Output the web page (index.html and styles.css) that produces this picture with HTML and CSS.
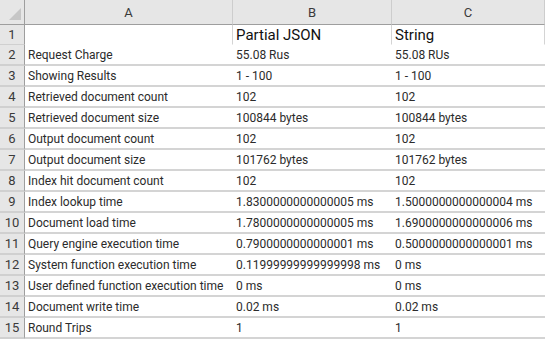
FILE: index.html
```html
<!DOCTYPE html>
<html>
<head>
<meta charset="utf-8">
<link rel="stylesheet" href="styles.css">
</head>
<body>
<table class="sheet">
  <colgroup>
    <col class="c-num"><col class="c-a"><col class="c-b"><col class="c-c">
  </colgroup>
  <thead>
    <tr class="colhead">
      <th class="corner"><span class="tri"></span></th>
      <th>A</th><th>B</th><th>C</th>
    </tr>
  </thead>
  <tbody>
    <tr class="first"><th class="rn">1</th><td></td><td class="big">Partial JSON</td><td class="big last">String</td></tr>
    <tr><th class="rn">2</th><td>Request Charge</td><td>55.08 Rus</td><td>55.08 RUs</td></tr>
    <tr><th class="rn">3</th><td>Showing Results</td><td>1 - 100</td><td>1 - 100</td></tr>
    <tr><th class="rn">4</th><td>Retrieved document count</td><td>102</td><td>102</td></tr>
    <tr><th class="rn">5</th><td>Retrieved document size</td><td>100844 bytes</td><td>100844 bytes</td></tr>
    <tr><th class="rn">6</th><td>Output document count</td><td>102</td><td>102</td></tr>
    <tr><th class="rn">7</th><td>Output document size</td><td>101762 bytes</td><td>101762 bytes</td></tr>
    <tr><th class="rn">8</th><td>Index hit document count</td><td>102</td><td>102</td></tr>
    <tr><th class="rn">9</th><td>Index lookup time</td><td>1.8300000000000005 ms</td><td>1.5000000000000004 ms</td></tr>
    <tr><th class="rn">10</th><td>Document load time</td><td>1.7800000000000005 ms</td><td>1.6900000000000006 ms</td></tr>
    <tr><th class="rn">11</th><td>Query engine execution time</td><td>0.7900000000000001 ms</td><td>0.5000000000000001 ms</td></tr>
    <tr><th class="rn">12</th><td>System function execution time</td><td>0.11999999999999998 ms</td><td>0 ms</td></tr>
    <tr><th class="rn">13</th><td>User defined function execution time</td><td>0 ms</td><td>0 ms</td></tr>
    <tr><th class="rn">14</th><td>Document write time</td><td>0.02 ms</td><td>0.02 ms</td></tr>
    <tr><th class="rn">15</th><td>Round Trips</td><td>1</td><td>1</td></tr>
  </tbody>
</table>
</body>
</html>
```

FILE: styles.css
```css
html, body {
  margin: 0;
  padding: 0;
  background: #ffffff;
}
.sheet {
  border-collapse: separate;
  border-spacing: 0;
  table-layout: fixed;
  width: 545px;
  font-family: Roboto, "Liberation Sans", sans-serif;
  font-size: 12px;
  color: #2b2b2b;
}
.c-num { width: 25px; }
.c-a { width: 208px; }
.c-b { width: 159px; }
.c-c { width: 153px; }

.colhead th {
  height: 24px;
  padding: 0;
  background: #e6e6e6;
  border-bottom: 1px solid #9e9e9e;
  border-right: 1px solid #cdcdcd;
  font-weight: normal;
  font-size: 13px;
  color: #3a3a3a;
  text-align: center;
  vertical-align: middle;
}
.colhead th.corner {
  position: relative;
  border-right: 1px solid #9e9e9e;
}
.tri {
  position: absolute;
  right: 3px;
  bottom: 4px;
  width: 0;
  height: 0;
  border-left: 12px solid transparent;
  border-bottom: 12px solid #c6c6c6;
}
.rn {
  background: #e6e6e6;
  border-right: 1px solid #9e9e9e;
  border-bottom: 2px solid #d0d0d0;
  font-weight: normal;
  font-size: 13px;
  color: #3a3a3a;
  text-align: center;
  padding: 0;
  height: 19px;
}
tbody td {
  padding: 0 0 0 3px;
  height: 19px;
  border-bottom: 2px solid #d4d4d4;
  white-space: nowrap;
  overflow: visible;
  vertical-align: middle;
}
tr.first td, tr.first th {
  height: 19px;
  border-bottom: 1px solid transparent;
}
tr.first th {
  border-bottom: 1px solid #d0d0d0;
}
tr.first td {
  border-right: 1px solid #d4d4d4;
}
.big {
  font-size: 15px;
  color: #111;
}
```
